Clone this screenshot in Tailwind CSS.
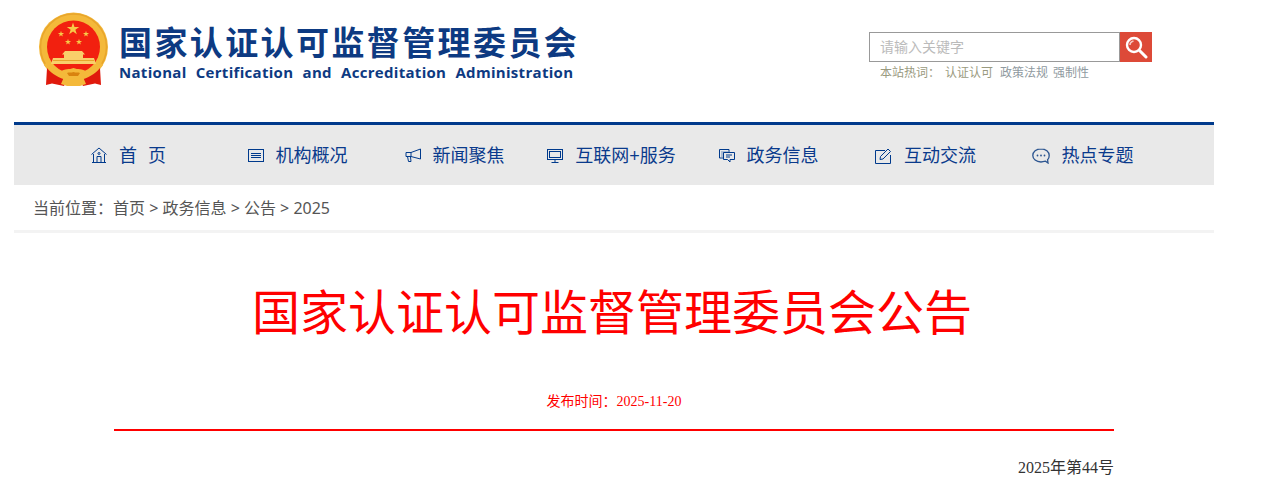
<!DOCTYPE html>
<html lang="zh-CN">
<head>
  <meta charset="UTF-8">
  <title>国家认证认可监督管理委员会公告</title>
  <script src="https://cdn.jsdelivr.net/npm/@tailwindcss/browser@4"></script>
</head>
<body class="bg-white h-[486px] overflow-hidden font-['Liberation_Sans','Noto_Sans_CJK_SC',sans-serif]">
  <div class="w-[1200px] ml-[14px]">
    <!-- header -->
    <header class="h-[122px] flex items-start">
      <svg class="w-[72px] h-[76px] ml-[24px] mt-[12px] shrink-0" viewBox="0 0 72 76">
        <defs>
          <polygon id="star" points="0,-1 .224,-.309 .951,-.309 .363,.118 .588,.809 0,.382 -.588,.809 -.363,.118 -.951,-.309 -.224,-.309" fill="#f7c948"/>
        </defs>
        <circle cx="35.5" cy="35" r="34.5" fill="#f4b93a"/>
        <circle cx="35.5" cy="35" r="33" fill="none" stroke="#e8a52c" stroke-width="1.5"/>
        <circle cx="35.5" cy="35" r="26.5" fill="#f2200f"/>
        <use href="#star" transform="translate(35 17) scale(6.5)"/>
        <use href="#star" transform="translate(23 22) scale(3.2)"/>
        <use href="#star" transform="translate(48 22) scale(3.2)"/>
        <use href="#star" transform="translate(30 30) scale(3.2)"/>
        <use href="#star" transform="translate(41 30) scale(3.2)"/>
        <!-- gate -->
        <path d="M27 39 H44 L47 42.5 H45 V46 H56 L58 52 H13 L15 46 H26 V42.5 H24 Z" fill="#f9cf6a"/>
        <path d="M15 48.5 H56" stroke="#e8a52c" stroke-width="1"/>
        <!-- wreath -->
        <path d="M9 50 C16 60 26 63 35.5 63 C45 63 55 60 62 50 L65 53 C56 66 46 70 35.5 70 C25 70 15 66 6 53 Z" fill="#f4b93a"/>
        <!-- ribbons -->
        <path d="M9 56 L8 73 L14 71.5 L26 74 L29 68 C21 66 14 62 9 56 Z" fill="#e0190c"/>
        <path d="M62 56 L63 73 L57 71.5 L45 74 L42 68 C50 66 57 62 62 56 Z" fill="#e0190c"/>
        <!-- knot -->
        <path d="M22 60 C27 56 31 58 35.5 56 C40 58 44 56 49 60 L45 65 L48 72 L42 74 H29 L23 72 L26 65 Z" fill="#f4b93a"/>
        <path d="M29 61 C31 60 33 61 35.5 60 C38 61 40 60 42 61 L40 64 H31 Z" fill="#d9830f"/>
      </svg>
      <div class="ml-[9px] mt-[22px] w-[480px] shrink-0">
        <div class="text-[33px] leading-[38px] font-bold tracking-[2.4px] text-[#0d3a82] whitespace-nowrap font-['Noto_Sans_CJK_SC',sans-serif]">国家认证认可监督管理委员会</div>
        <div class="mt-[2px] text-[15px] leading-[20px] font-bold text-[#0d3a82] whitespace-nowrap tracking-[0.3px] [word-spacing:5px] font-['Open_Sans','Noto_Sans',sans-serif]">National Certification and Accreditation Administration</div>
      </div>
      <div class="ml-[270px] mt-[32px] w-[283px] shrink-0">
        <div class="flex h-[30px]">
          <div class="w-[251px] border border-[#999] pl-[10px] text-[14px] leading-[28px] text-[#bbb]">请输入关键字</div>
          <div class="w-[32px] bg-[#dd4a38] flex items-center justify-center">
            <svg class="w-[24px] h-[24px]" viewBox="0 0 24 24" fill="none" stroke="#fff">
              <circle cx="10" cy="10" r="7" stroke-width="2.4"/>
              <path d="M15.5 15.5 L22 22" stroke-width="3" stroke-linecap="round"/>
              <path d="M6 10 C6 8 7.5 6.5 9.5 6" stroke-width="1.6" opacity="0.7"/>
            </svg>
          </div>
        </div>
        <div class="flex mt-[3px] ml-[11px] text-[12px] leading-[16px]">
          <span class="w-[65px] text-[#9a9a80]">本站热词：</span>
          <span class="w-[55px] text-[#9a9a80]">认证认可</span>
          <span class="w-[53px] text-[#8f9aa0]">政策法规</span>
          <span class="text-[#8f9aa0]">强制性</span>
        </div>
      </div>
    </header>

    <!-- nav -->
    <nav class="h-[63px] border-t-[3px] border-[#003a8c] bg-[#e9e9e9] flex pl-[24px] pt-[1px] text-[18px] text-[#0a3a8c]">
      <a class="w-[181px] flex items-center justify-center gap-[12px]">
        <svg class="w-[16px] h-[17px]" viewBox="0 0 16 17" fill="none" stroke="#003a8c"><path d="M0.5 7.5 L8 1 L15.5 7.5 M2.5 7 V15.5 H13.5 V7 M1 15.5 H15 M6 15.5 V9.5 H10 V15.5"/><circle cx="8" cy="6.5" r="1"/></svg>
        <span class="pt-[2px] whitespace-pre [word-spacing:6px]">首 页</span>
      </a>
      <a class="w-[157px] flex items-center justify-center gap-[12px]">
        <svg class="w-[16px] h-[13px]" viewBox="0 0 16 13" fill="none" stroke="#003a8c"><rect x="0.5" y="0.5" width="15" height="12"/><path d="M3 4.5 H13 M3 6.5 H13 M3 8.5 H13"/></svg>
        <span class="pt-[2px]">机构概况</span>
      </a>
      <a class="w-[157px] flex items-center justify-center gap-[12px]">
        <svg class="w-[16px] h-[15px]" viewBox="0 0 16 15" fill="none" stroke="#003a8c"><path d="M15.5 1 V11 L6 8.5 H1 V4.5 H6 Z M6 4.5 V8.5 M2.5 8.5 L3.5 13.5 H6 L5.5 9"/></svg>
        <span class="pt-[2px]">新闻聚焦</span>
      </a>
      <a class="w-[157px] flex items-center justify-center gap-[12px]">
        <svg class="w-[16px] h-[14px]" viewBox="0 0 16 14" fill="none" stroke="#003a8c"><rect x="0.5" y="0.5" width="15" height="10"/><rect x="2.5" y="2.5" width="11" height="6"/><path d="M8 11 V13 M4.5 13.5 H11.5"/></svg>
        <span class="pt-[2px]">互联网+服务</span>
      </a>
      <a class="w-[157px] flex items-center justify-center gap-[12px]">
        <svg class="w-[16px] h-[14px]" viewBox="0 0 16 14" fill="none" stroke="#003a8c"><path d="M4 9 H0.5 V0.5 H10 V3"/><path d="M2 3 H9 M2 5 H4 M2 7 H4" stroke="#6f8fbd"/><path d="M4.5 3.5 H15.5 V10.5 H11 V13 L8.5 10.5 H4.5 Z M7 6 H13 M7 8 H11"/></svg>
        <span class="pt-[2px]">政务信息</span>
      </a>
      <a class="w-[157px] flex items-center justify-center gap-[13px]">
        <svg class="w-[16px] h-[16px]" viewBox="0 0 16 16" fill="none" stroke="#003a8c"><path d="M10 2.5 H0.5 V15.5 H15.5 V7"/><path d="M5 11.5 L5.5 8.5 L13 1 L15.5 3.5 L8 11 Z" /></svg>
        <span class="pt-[2px]">互动交流</span>
      </a>
      <a class="w-[157px] flex items-center justify-center gap-[12px]">
        <svg class="w-[18px] h-[16px]" viewBox="0 0 18 16" fill="none" stroke="#2c5590" stroke-width="1.3"><path d="M9 0.8 C4.2 0.8 0.8 3.8 0.8 7.4 C0.8 11 4.2 14 9 14 C10.5 14 12.5 13.5 13.5 13.2 L16 15 L15.6 11.8 C16.8 10.6 17.2 9 17.2 7.4 C17.2 3.8 13.8 0.8 9 0.8 Z"/><circle cx="5.5" cy="7.5" r="0.9" fill="#2c5590" stroke="none"/><circle cx="9" cy="7.5" r="0.9" fill="#2c5590" stroke="none"/><circle cx="12.5" cy="7.5" r="0.9" fill="#2c5590" stroke="none"/></svg>
        <span class="pt-[2px]">热点专题</span>
      </a>
    </nav>

    <!-- breadcrumb -->
    <div class="h-[48px] border-b-[3px] border-[#f3f3f3] pl-[19px] pt-[10px] text-[16px] leading-[26px] text-[#555] font-['Noto_Sans','Noto_Sans_CJK_SC',sans-serif]">当前位置：首页 &gt; 政务信息 &gt; 公告 &gt; 2025</div>

    <!-- article -->
    <main class="px-[100px]">
      <h1 class="mt-[51px] text-center text-[48px] leading-[60px] text-[#ff0000] whitespace-nowrap -translate-x-[2px]">国家认证认可监督管理委员会公告</h1>
      <p class="mt-[48px] text-center text-[14px] leading-[20px] text-[#ff0000] font-['Liberation_Serif','Noto_Sans_CJK_SC',serif]">发布时间：2025-11-20</p>
      <div class="mt-[17px] h-[2px] bg-[#ff0000]"></div>
      <p class="mt-[25px] text-right text-[16px] leading-[24px] text-[#333] font-['Liberation_Serif','Noto_Sans_CJK_SC',serif]">2025年第44号</p>
    </main>
  </div>
</body>
</html>
